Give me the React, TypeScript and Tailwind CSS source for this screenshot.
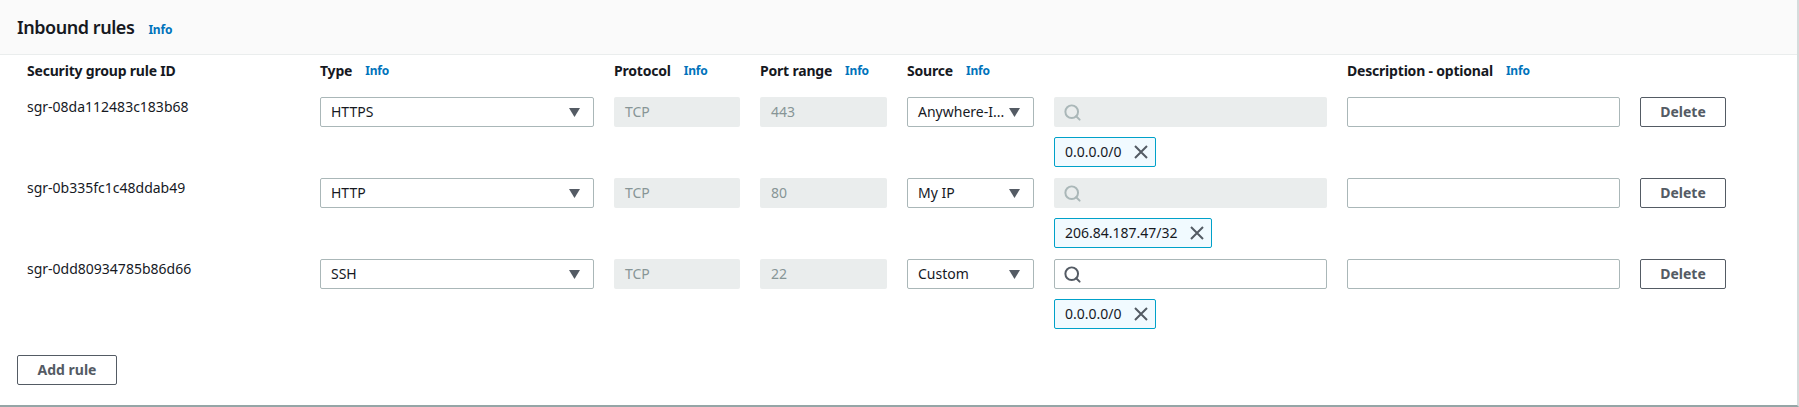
import React from "react";
import { Search } from "lucide-react";

interface Rule {
  id: string;
  type: string;
  port: string;
  source: string;
  cidr: string;
  locked: boolean;
}

const rules: Rule[] = [
  { id: "sgr-08da112483c183b68", type: "HTTPS", port: "443", source: "Anywhere-I...", cidr: "0.0.0.0/0", locked: true },
  { id: "sgr-0b335fc1c48ddab49", type: "HTTP", port: "80", source: "My IP", cidr: "206.84.187.47/32", locked: true },
  { id: "sgr-0dd80934785b86d66", type: "SSH", port: "22", source: "Custom", cidr: "0.0.0.0/0", locked: false },
];

const gridCols =
  "grid grid-cols-[273px_274px_126px_127px_127px_273px_273px_86px] gap-x-5";

const Info = () => (
  <span className="ml-[13px] text-xs font-bold tracking-[-0.2px] text-[#0073bb]">Info</span>
);

const Label: React.FC<{ text?: string; info?: boolean }> = ({ text, info = true }) => (
  <div className="flex items-center h-5 text-sm font-bold tracking-[-0.2px] text-[#16191f] whitespace-nowrap">
    {text}
    {info && text && <Info />}
  </div>
);

const Select: React.FC<{ value: string }> = ({ value }) => (
  <div className="flex items-center justify-between h-[30px] pl-[10px] pr-[13px] bg-white border border-[#aab7b8] rounded-[2px] text-sm text-[#16191f] whitespace-nowrap">
    <span>{value}</span>
    <svg width="11" height="9" viewBox="0 0 11 9" className="shrink-0">
      <path d="M0 0h11L5.5 9z" fill="#545b64" />
    </svg>
  </div>
);

const ReadOnly: React.FC<{ value: string }> = ({ value }) => (
  <div className="flex items-center h-[30px] px-[11px] bg-[#eaeded] rounded-[2px] text-sm text-[#879596]">
    {value}
  </div>
);

const Button: React.FC<{ label: string; className?: string }> = ({ label, className }) => (
  <button
    className={`h-[30px] bg-white border border-[#545b64] rounded-[2px] text-sm font-bold text-[#545b64] ${className ?? ""}`}
  >
    {label}
  </button>
);

const RuleRow: React.FC<{ rule: Rule }> = ({ rule }) => (
  <div className={`${gridCols} h-[81px]`}>
    <div className="text-sm leading-5 text-[#16191f]">{rule.id}</div>
    <Select value={rule.type} />
    <ReadOnly value="TCP" />
    <ReadOnly value={rule.port} />
    <Select value={rule.source} />
    <div className="flex flex-col items-start gap-[10px]">
      <div
        className={`flex items-center w-full h-[30px] rounded-[2px] ${
          rule.locked ? "pl-[9px] bg-[#eaeded] text-[#aab7b8]" : "pl-[8px] bg-white border border-[#aab7b8] text-[#545b64]"
        }`}
      >
        <Search size={19} strokeWidth={2.5} />
      </div>
      <div className="flex items-center h-[30px] pl-[10px] pr-[7px] gap-3 bg-[#f1faff] border border-[#00a1c9] rounded-[2px] text-sm text-[#16191f]">
        {rule.cidr}
        <svg width="14" height="14" viewBox="0 0 14 14" className="shrink-0">
          <path d="M1 1l12 12M13 1L1 13" stroke="#545b64" strokeWidth="2" fill="none" />
        </svg>
      </div>
    </div>
    <div className="h-[30px] bg-white border border-[#aab7b8] rounded-[2px]" />
    <Button label="Delete" />
  </div>
);

export default function App() {
  return (
    <div className="w-[1799px] h-[407px] overflow-hidden bg-white font-['Noto_Sans',sans-serif] border-b-2 border-r-2 border-b-[#95a5a6] border-r-[#d5dbdb]">
      <div className="flex items-baseline h-[55px] pl-[17px] pt-[13px] bg-[#fafafa] border-b border-[#eaeded]">
        <h2 className="text-lg font-semibold tracking-[-0.45px] text-[#16191f]">Inbound rules</h2>
        <span className="ml-px">
          <Info />
        </span>
      </div>
      <div className="pl-[27px] pt-[6px]">
        <div className={`${gridCols} h-9`}>
          <Label text="Security group rule ID" info={false} />
          <Label text="Type" />
          <Label text="Protocol" />
          <Label text="Port range" />
          <Label text="Source" />
          <Label />
          <Label text="Description - optional" />
        </div>
        {rules.map((rule) => (
          <RuleRow key={rule.id} rule={rule} />
        ))}
      </div>
      <div className="pl-[17px] pt-[15px]">
        <Button label="Add rule" className="w-[100px]" />
      </div>
    </div>
  );
}
